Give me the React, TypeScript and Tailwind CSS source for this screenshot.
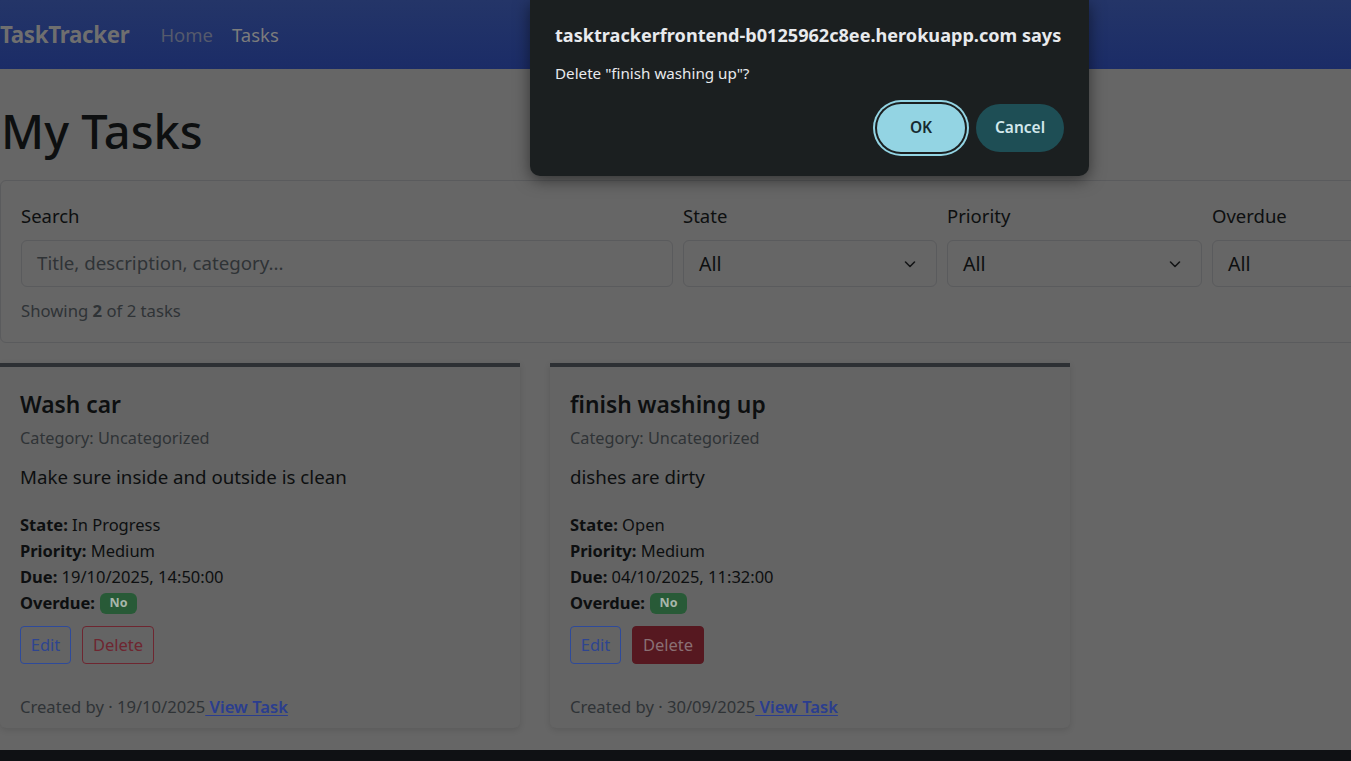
import React from "react";

const tasks = [
	{
		title: "Wash car",
		desc: "Make sure inside and outside is clean",
		state: "In Progress",
		priority: "Medium",
		due: "19/10/2025, 14:50:00",
		created: "19/10/2025",
		deleteSolid: false,
	},
	{
		title: "finish washing up",
		desc: "dishes are dirty",
		state: "Open",
		priority: "Medium",
		due: "04/10/2025, 11:32:00",
		created: "30/09/2025",
		deleteSolid: true,
	},
];

const Chevron = () => (
	<svg width="16" height="16" viewBox="0 0 16 16" fill="none" stroke="#141516" strokeWidth="1.6" strokeLinecap="round" strokeLinejoin="round">
		<path d="M3.5 6 8 10.5 12.5 6" />
	</svg>
);

const FilterSelect = ({ label, width }: { label: string; width: string }) => (
	<div className={`flex flex-col shrink-0 ${width}`}>
		<label className="text-[18.5px] leading-[24px] text-[#0d0f10] mb-[12px]">{label}</label>
		<div className="h-[47px] rounded-[6px] border border-[#5a5b5d] flex items-center justify-between pl-[15px] pr-[18px]">
			<span className="text-[19.5px] text-[#0d0f10]">All</span>
			<Chevron />
		</div>
	</div>
);

const TaskCard = ({ task }: { task: (typeof tasks)[number] }) => (
	<div className="w-[520px] shrink-0 bg-[#646464] border-t-[4px] border-t-[#2d3034] rounded-b-[6px] shadow-[0_2px_6px_rgba(0,0,0,0.12)] px-[20px] pt-[23px] pb-[9px] flex flex-col">
		<h4 className="text-[22.8px] leading-[29px] font-semibold text-[#0d0f10]">{task.title}</h4>
		<div className="text-[16.3px] leading-[24px] text-[#2f3336] mt-[7px]">Category: Uncategorized</div>
		<p className="text-[18.7px] leading-[26px] text-[#0d0f10] mt-[14px]">{task.desc}</p>
		<div className="mt-[22px] text-[16.5px] leading-[26px] text-[#0d0f10]">
			<div><b className="font-bold">State:</b> {task.state}</div>
			<div><b className="font-bold">Priority:</b> {task.priority}</div>
			<div><b className="font-bold">Due:</b> {task.due}</div>
			<div className="flex items-center gap-[5px]">
				<b className="font-bold">Overdue:</b>
				<span className="w-[37px] h-[21px] flex items-center justify-center bg-[#285a37] text-[#a7b6ab] text-[12.5px] font-bold rounded-[6px]">No</span>
			</div>
		</div>
		<div className="flex gap-[11px] mt-[10px]">
			<button className="h-[38px] w-[51px] rounded-[4px] border border-[#2e4a9a] text-[#2e4590] text-[16.5px]">Edit</button>
			{task.deleteSolid ? (
				<button className="h-[38px] w-[72px] rounded-[4px] bg-[#561820] border border-[#561820] text-[#8a7074] text-[16.5px]">Delete</button>
			) : (
				<button className="h-[38px] w-[72px] rounded-[4px] border border-[#6e2630] text-[#6e2630] text-[16.5px]">Delete</button>
			)}
		</div>
		<div className="mt-[31px] text-[16.6px] leading-[24px] text-[#2f3336]">
			Created by · {task.created}
			<a className="text-[#2a3d8f] font-semibold underline underline-offset-2"> View Task</a>
		</div>
	</div>
);

export default function App() {
	return (
		<div className="relative w-[1351px] h-[761px] overflow-hidden bg-[#666666] flex flex-col" style={{ fontFamily: '"Noto Sans", "Open Sans", sans-serif' }}>
			{/* navbar */}
			<nav className="h-[69px] shrink-0 bg-gradient-to-b from-[#243568] to-[#1b2c67] flex items-center">
				<span className="text-[22.3px] font-bold text-[#6f6f6f] tracking-[-0.3px]">TaskTracker</span>
				<div className="flex gap-[19px] ml-[31px] text-[18.5px]">
					<span className="text-[#555a6c]">Home</span>
					<span className="text-[#7c7c7c]">Tasks</span>
				</div>
			</nav>

			<main className="flex-1 flex flex-col min-h-0">
				<h1 className="text-[47px] leading-[54px] font-medium text-[#0d0f10] mt-[35px] ml-[1px]">My Tasks</h1>

				{/* filters */}
				<div className="mt-[22px] w-[1490px] border border-[#5a5b5d] rounded-[6px] pl-[20px] pt-[23px] pb-[19px]">
					<div className="flex gap-[10px]">
						<div className="flex flex-col w-[652px] shrink-0">
							<label className="text-[18.5px] leading-[24px] text-[#0d0f10] mb-[12px]">Search</label>
							<div className="h-[47px] rounded-[6px] border border-[#5a5b5d] flex items-center pl-[15px]">
								<span className="text-[18.7px] text-[#2f3336]">Title, description, category...</span>
							</div>
						</div>
						<FilterSelect label="State" width="w-[254px]" />
						<FilterSelect label="Priority" width="w-[255px]" />
						<FilterSelect label="Overdue" width="w-[255px]" />
					</div>
					<div className="mt-[12px] text-[16.7px] leading-[24px] text-[#2f3336]">
						Showing <b className="font-bold">2</b> of 2 tasks
					</div>
				</div>

				{/* cards */}
				<div className="flex gap-[30px] mt-[20px]">
					{tasks.map((t) => (
						<TaskCard key={t.title} task={t} />
					))}
				</div>
			</main>

			{/* dark strip at bottom */}
			<div className="h-[11px] shrink-0 bg-[#0f1114]" />

			{/* confirm dialog */}
			<div className="absolute top-0 left-[530px] w-[559px] h-[176px] bg-[#1b1f20] rounded-b-[10px] shadow-[0_4px_16px_rgba(0,0,0,0.5)] px-[25px] pt-[22px] flex flex-col">
				<div className="text-[18.1px] leading-[26px] font-bold text-[#e8eaed]">tasktrackerfrontend-b0125962c8ee.herokuapp.com says</div>
				<div className="text-[15.2px] leading-[20px] text-[#e8eaed] mt-[15px]">Delete "finish washing up"?</div>
				<div className="flex justify-end gap-[11px] mt-[21px]">
					<button className="w-[88px] h-[48px] rounded-full bg-[#93d4e3] text-[#172a30] text-[15.5px] font-semibold ring-2 ring-[#93d4e3] ring-offset-2 ring-offset-[#1b1f20]">OK</button>
					<button className="w-[88px] h-[48px] rounded-full bg-[#1e4e55] text-[#d2e8ec] text-[15.5px] font-semibold">Cancel</button>
				</div>
			</div>
		</div>
	);
}
